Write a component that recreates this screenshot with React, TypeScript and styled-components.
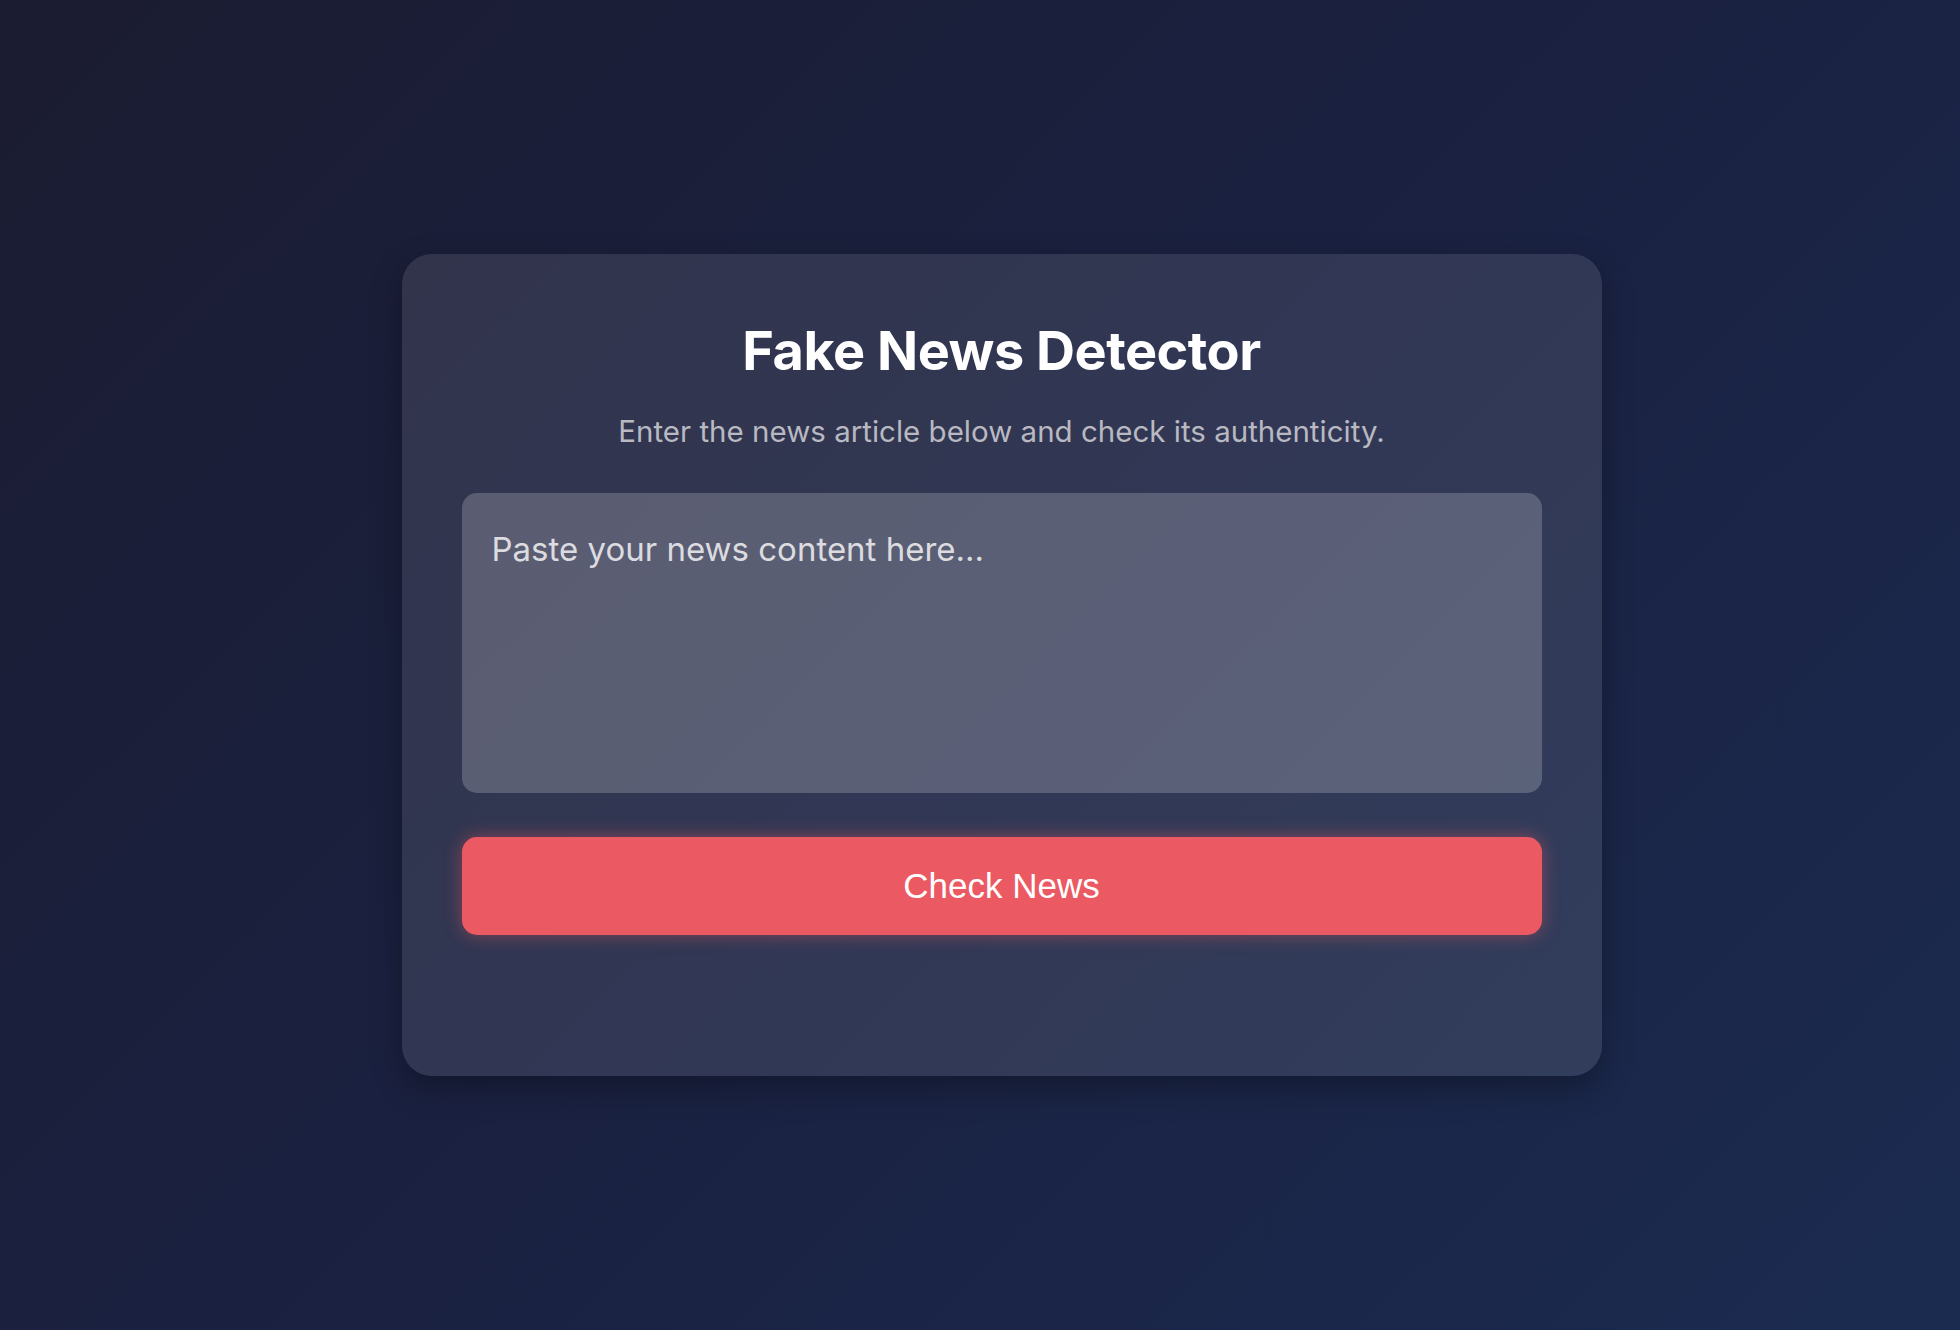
import React, { useState } from 'react'
import styled, { createGlobalStyle } from 'styled-components'

const GlobalStyle = createGlobalStyle`
  * { box-sizing: border-box; }
  html, body {
    margin: 0;
    padding: 0;
    height: 100%;
  }
  body {
    font-family: Inter, "Noto Sans", sans-serif;
    background: linear-gradient(135deg, #1b1c31 0%, #1a2141 50%, #1b2b50 100%);
    min-height: 1330px;
  }
`

const Page = styled.div`
  width: 100%;
  min-height: 1330px;
  display: flex;
  align-items: center;
  justify-content: center;
  padding-left: 43px;
`

const Card = styled.div`
  width: 1200px;
  height: 822px;
  padding: 61px 60px 0;
  border-radius: 30px;
  background: rgba(255, 255, 255, 0.1);
  box-shadow: 0 12px 32px rgba(0, 0, 0, 0.3);
  display: flex;
  flex-direction: column;
  align-items: center;
`

const Title = styled.h1`
  margin: 0;
  font-size: 54px;
  line-height: 72px;
  font-weight: 700;
  color: #ffffff;
  letter-spacing: -0.5px;
`

const Subtitle = styled.p`
  margin: 25px 0 42px;
  font-size: 29.5px;
  line-height: 39px;
  color: #b9b9c2;
`

const NewsInput = styled.textarea`
  width: 100%;
  height: 300px;
  padding: 35px 30px;
  border: none;
  outline: none;
  resize: none;
  border-radius: 15px;
  background: rgba(255, 255, 255, 0.2);
  font-family: Inter, "Noto Sans", sans-serif;
  font-size: 33px;
  line-height: 42px;
  color: #ffffff;

  &::placeholder {
    color: #dcdce0;
  }
`

const CheckButton = styled.button`
  width: 100%;
  height: 98px;
  margin-top: 44px;
  border: none;
  border-radius: 15px;
  background: #eb5a62;
  box-shadow: 0 0 18px rgba(235, 90, 98, 0.45);
  color: #ffffff;
  font-family: "Liberation Sans", Arial, sans-serif;
  font-size: 35px;
  cursor: pointer;
`

export default function App() {
  const [text, setText] = useState('')

  return (
    <>
      <GlobalStyle />
      <Page>
        <Card>
          <Title>Fake News Detector</Title>
          <Subtitle>Enter the news article below and check its authenticity.</Subtitle>
          <NewsInput
            placeholder="Paste your news content here..."
            value={text}
            onChange={(e) => setText(e.target.value)}
          />
          <CheckButton>Check News</CheckButton>
        </Card>
      </Page>
    </>
  )
}
